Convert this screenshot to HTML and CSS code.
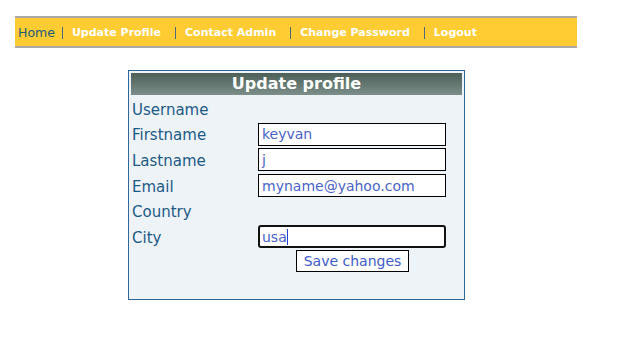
FILE: index.html
```html
<!DOCTYPE html>
<html>
<head>
<meta charset="utf-8">
<link rel="stylesheet" href="styles.css">
</head>
<body>
<nav class="nav">
  <a class="nav-home">Home</a><span class="sep"></span>
  <a class="nav-link">Update Profile</a><span class="sep"></span>
  <a class="nav-link">Contact Admin</a><span class="sep"></span>
  <a class="nav-link">Change Password</a><span class="sep"></span>
  <a class="nav-link">Logout</a>
</nav>
<div class="panel">
  <div class="panel-title">Update profile</div>
  <div class="form">
    <div class="label">Username</div><div class="field"></div>
    <div class="label">Firstname</div><div class="field"><div class="input">keyvan</div></div>
    <div class="label">Lastname</div><div class="field"><div class="input">j</div></div>
    <div class="label">Email</div><div class="field"><div class="input">myname@yahoo.com</div></div>
    <div class="label">Country</div><div class="field"></div>
    <div class="label">City</div><div class="field"><div class="input focused">usa<span class="caret"></span></div></div>
  </div>
  <div class="actions"><div class="button">Save changes</div></div>
</div>
</body>
</html>
```
FILE: styles.css
```css
html, body {
  margin: 0;
  padding: 0;
  background: #ffffff;
}
body {
  padding: 16px 0 0 15px;
  font-family: "DejaVu Sans", Verdana, sans-serif;
}
.nav {
  width: 562px;
  height: 32px;
  box-sizing: border-box;
  background: #ffcc33;
  border-top: 2px solid #a9a9a9;
  border-bottom: 2px solid #a9a9a9;
  display: flex;
  align-items: center;
  padding-left: 3px;
}
.nav-home {
  font-size: 12.5px;
  color: #1c5a7c;
  margin-right: 7px;
}
.sep {
  width: 1px;
  height: 12px;
  background: #4e6b7c;
  margin-right: 9px;
  margin-top: 1px;
}
.nav-link {
  font-size: 11px;
  font-weight: bold;
  color: #ffffff;
  margin-right: 14px;
}
.panel {
  width: 331px;
  height: 224px;
  margin: 22px 0 0 113px;
  border: 1px solid #2f6799;
  background: #eef3f7;
  padding: 2px;
  box-sizing: content-box;
}
.panel-title {
  height: 22px;
  background: linear-gradient(#4c5f57, #7b8e89);
  color: #ffffff;
  font-weight: bold;
  font-size: 16px;
  text-align: center;
  line-height: 22px;
}
.form {
  display: grid;
  grid-template-columns: 126px 188px;
  grid-auto-rows: 25.6px;
  padding-left: 1px;
  margin-top: 1px;
}
.label {
  font-size: 15px;
  color: #1c5a86;
  display: flex;
  align-items: center;
  padding-top: 2px;
}
.field {
  display: flex;
  align-items: center;
}
.input {
  width: 188px;
  height: 23px;
  box-sizing: border-box;
  border: 1px solid #000000;
  background: #ffffff;
  font-size: 14px;
  color: #4a63c9;
  padding-left: 3px;
  display: flex;
  align-items: center;
}
.input.focused {
  border: 2px solid #111111;
  border-radius: 3px;
  padding-left: 2px;
}
.caret {
  display: inline-block;
  width: 1px;
  height: 16px;
  background: #2244cc;
}
.actions {
  display: flex;
  padding-left: 165px;
}
.button {
  width: 113px;
  height: 22px;
  box-sizing: border-box;
  border: 1px solid #000000;
  background: #ffffff;
  color: #3e5bc8;
  font-size: 14px;
  display: flex;
  align-items: center;
  justify-content: center;
}
```
